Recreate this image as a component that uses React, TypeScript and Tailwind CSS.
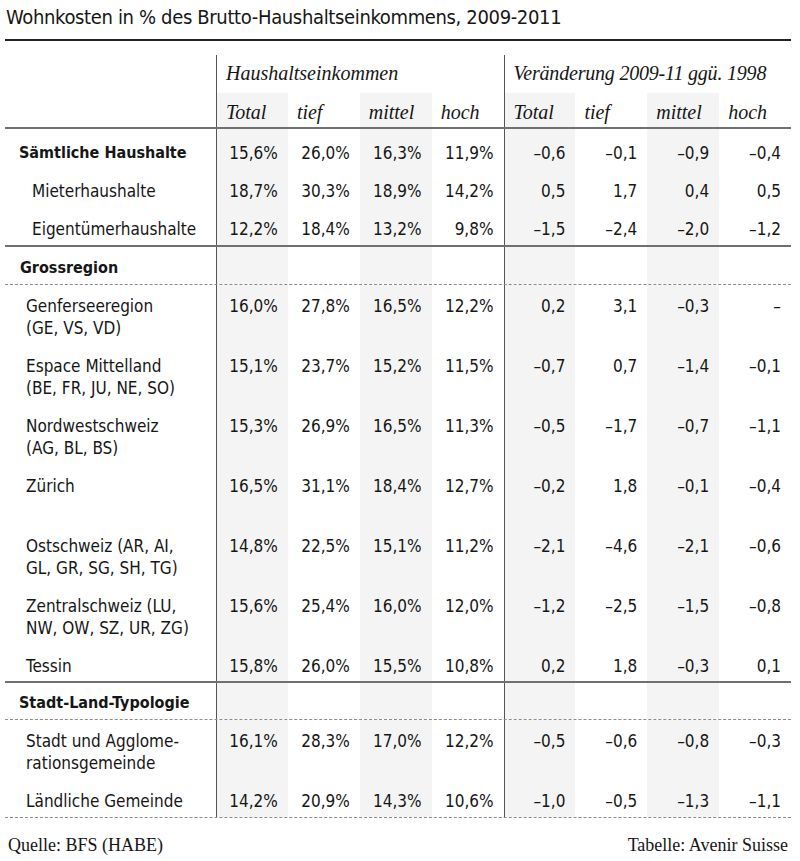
const cond = "font-['DejaVu_Sans_Condensed','DejaVu_Sans',sans-serif]"
const serif = "font-['Liberation_Serif','Times_New_Roman',serif]"
const grid = 'grid grid-cols-[211px_repeat(8,minmax(0,1fr))]'

type Row = {
  label: string[]
  bold?: boolean
  indent: string
  h: string
  pt: string
  line?: string
  values?: string[]
}

const solid = 'border-b-2 border-[#707070]'
const dashed = 'border-b border-dashed border-[#8c8c8c]'

const rows: Row[] = [
  { label: ['Sämtliche Haushalte'], bold: true, indent: 'pl-[14px]', h: 'h-[41px]', pt: 'pt-[13px]', values: ['15,6%', '26,0%', '16,3%', '11,9%', '–0,6', '–0,1', '–0,9', '–0,4'] },
  { label: ['Mieterhaushalte'], indent: 'pl-[27px]', h: 'h-[38px]', pt: 'pt-[10px]', values: ['18,7%', '30,3%', '18,9%', '14,2%', '0,5', '1,7', '0,4', '0,5'] },
  { label: ['Eigentümerhaushalte'], indent: 'pl-[27px]', h: 'h-[39px]', pt: 'pt-[10px]', line: solid, values: ['12,2%', '18,4%', '13,2%', '9,8%', '–1,5', '–2,4', '–2,0', '–1,2'] },
  { label: ['Grossregion'], bold: true, indent: 'pl-[15px]', h: 'h-[38px]', pt: 'pt-[10px]', line: dashed },
  { label: ['Genferseeregion', '(GE, VS, VD)'], indent: 'pl-[21px]', h: 'h-[60px]', pt: 'pt-[10px]', values: ['16,0%', '27,8%', '16,5%', '12,2%', '0,2', '3,1', '–0,3', '–'] },
  { label: ['Espace Mittelland', '(BE, FR, JU, NE, SO)'], indent: 'pl-[21px]', h: 'h-[60px]', pt: 'pt-[10px]', values: ['15,1%', '23,7%', '15,2%', '11,5%', '–0,7', '0,7', '–1,4', '–0,1'] },
  { label: ['Nordwestschweiz', '(AG, BL, BS)'], indent: 'pl-[21px]', h: 'h-[60px]', pt: 'pt-[10px]', values: ['15,3%', '26,9%', '16,5%', '11,3%', '–0,5', '–1,7', '–0,7', '–1,1'] },
  { label: ['Zürich'], indent: 'pl-[21px]', h: 'h-[60px]', pt: 'pt-[10px]', values: ['16,5%', '31,1%', '18,4%', '12,7%', '–0,2', '1,8', '–0,1', '–0,4'] },
  { label: ['Ostschweiz (AR, AI,', 'GL, GR, SG, SH, TG)'], indent: 'pl-[21px]', h: 'h-[60px]', pt: 'pt-[10px]', values: ['14,8%', '22,5%', '15,1%', '11,2%', '–2,1', '–4,6', '–2,1', '–0,6'] },
  { label: ['Zentralschweiz (LU,', 'NW, OW, SZ, UR, ZG)'], indent: 'pl-[21px]', h: 'h-[60px]', pt: 'pt-[10px]', values: ['15,6%', '25,4%', '16,0%', '12,0%', '–1,2', '–2,5', '–1,5', '–0,8'] },
  { label: ['Tessin'], indent: 'pl-[21px]', h: 'h-[38px]', pt: 'pt-[10px]', line: solid, values: ['15,8%', '26,0%', '15,5%', '10,8%', '0,2', '1,8', '–0,3', '0,1'] },
  { label: ['Stadt-Land-Typologie'], bold: true, indent: 'pl-[14px]', h: 'h-[37px]', pt: 'pt-[9px]', line: dashed },
  { label: ['Stadt und Agglome-', 'rationsgemeinde'], indent: 'pl-[21px]', h: 'h-[60px]', pt: 'pt-[10px]', values: ['16,1%', '28,3%', '17,0%', '12,2%', '–0,5', '–0,6', '–0,8', '–0,3'] },
  { label: ['Ländliche Gemeinde'], indent: 'pl-[21px]', h: 'h-[38px]', pt: 'pt-[10px]', line: dashed, values: ['14,2%', '20,9%', '14,3%', '10,6%', '–1,0', '–0,5', '–1,3', '–1,1'] },
]

// columns 1,3,5,7 are shaded, 1 and 5 carry the divider
function cellClass(i: number) {
  return [i % 2 === 0 ? 'bg-[#f4f4f4]' : '', i === 0 || i === 4 ? 'border-l border-[#555]' : '']
    .filter(Boolean)
    .join(' ')
}

const subheads = ['Total', 'tief', 'mittel', 'hoch', 'Total', 'tief', 'mittel', 'hoch']

export default function App() {
  return (
    <div className="w-[800px] min-h-[861px] bg-white text-[#161616]">
      <div className="ml-[5px] w-[786px]">
        <div className={`h-[41px] border-b-2 border-[#222] pl-px pt-[5px] text-[20px] leading-[24px] tracking-[-0.35px] ${cond}`}>
          Wohnkosten in % des Brutto-Haushaltseinkommens, 2009-2011
        </div>

        <div className={`mt-[14px] ${grid} h-[38px] ${serif} italic text-[20px] leading-[24px]`}>
          <div />
          <div className="col-span-4 border-l border-[#555] pl-[9px] pt-[6px]">Haushaltseinkommen</div>
          <div className="col-span-4 border-l border-[#555] pl-[9px] pt-[6px] tracking-[-0.2px]">Veränderung 2009-11 ggü. 1998</div>
        </div>
        <div className={`${grid} h-[36px] ${solid} ${serif} italic text-[20px] leading-[24px]`}>
          <div />
          {subheads.map((s, i) => (
            <div key={i} className={`${cellClass(i)} pl-[9px] pt-[7px]`}>
              {s}
            </div>
          ))}
        </div>

        {rows.map((r, ri) => (
          <div key={ri} className={`${grid} ${r.h} ${r.line ?? ''} ${cond} text-[17px] leading-[22px]`}>
            <div className={`${r.indent} ${r.pt} ${r.bold ? 'font-bold text-[16px]' : ''}`}>
              {r.label.map((l, li) => (
                <div key={li}>{l}</div>
              ))}
            </div>
            {Array.from({ length: 8 }).map((_, i) => (
              <div key={i} className={`${cellClass(i)} ${r.pt} pr-[10px] text-right`}>
                {r.values ? r.values[i] : ''}
              </div>
            ))}
          </div>
        ))}

        <div className={`mt-[15px] flex justify-between pl-[3px] pr-[3px] text-[18px] leading-[24px] ${serif}`}>
          <span>Quelle: BFS (HABE)</span>
          <span>Tabelle: Avenir Suisse</span>
        </div>
      </div>
    </div>
  )
}
